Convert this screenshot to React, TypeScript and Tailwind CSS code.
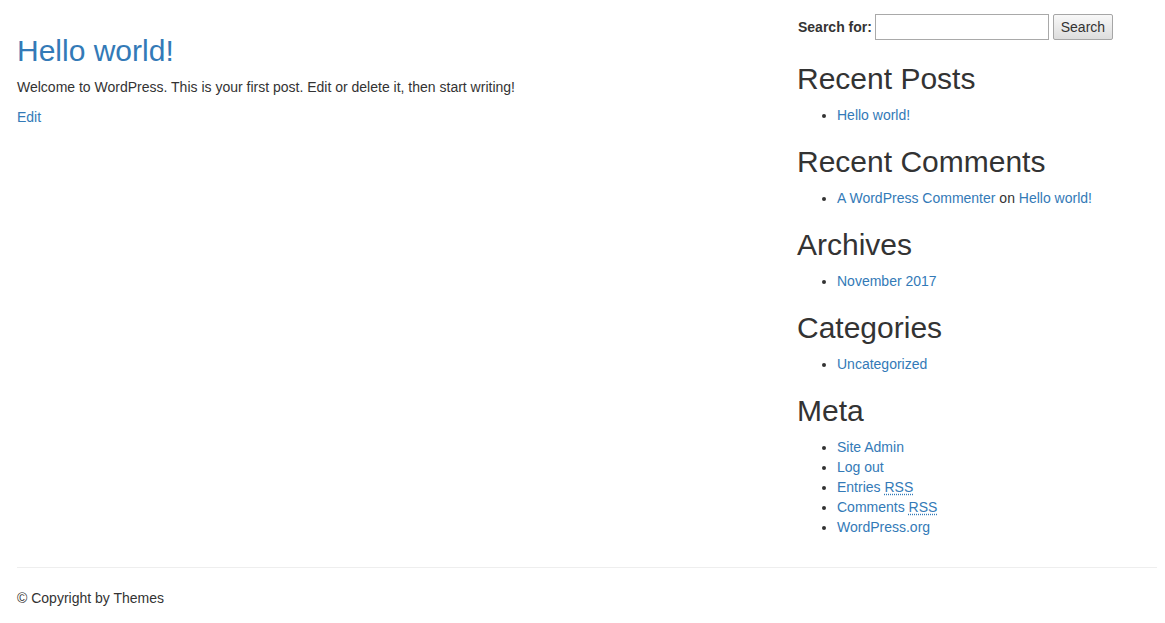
const Widget = ({ title, children }: { title: string; children: React.ReactNode }) => (
  <section>
    <h2 className="mt-[20px] mb-[10px] text-[30px] leading-[33px] font-medium text-[#333]">{title}</h2>
    <ul className="list-disc pl-[40px] mb-[10px]">{children}</ul>
  </section>
);

const A = ({ children }: { children: React.ReactNode }) => (
  <a href="#" className="text-[#337ab7] hover:underline">
    {children}
  </a>
);

const Rss = () => (
  <abbr title="Really Simple Syndication" className="underline decoration-dotted decoration-[#337ab7] underline-offset-2">
    RSS
  </abbr>
);

export default function App() {
  return (
    <div className="min-h-screen bg-white text-[14px] leading-[20px] text-[#333] font-['Liberation_Sans',Arial,sans-serif] pl-[17px] pr-[8px]">
      <div className="flex">
        {/* Main */}
        <main className="flex-1 pt-[34px]">
          <article>
            <h2 className="mb-[10px] text-[30px] leading-[33px] font-medium">
              <a href="#" className="text-[#337ab7]">Hello world!</a>
            </h2>
            <p className="mb-[10px]">Welcome to WordPress. This is your first post. Edit or delete it, then start writing!</p>
            <A>Edit</A>
          </article>
        </main>

        {/* Sidebar */}
        <aside className="w-[360px] pt-[14px]">
          <form className="flex items-center h-[26px]">
            <label className="font-bold ml-[1px] mr-[3px]">Search for:</label>
            <input
              type="text"
              className="w-[174px] h-[26px] border border-[#a9a9a9] px-1 outline-none"
            />
            <button
              type="button"
              className="ml-[4px] h-[26px] w-[60px] border border-[#a6a6a6] rounded-[2px] bg-gradient-to-b from-[#f8f8f8] to-[#dddddd] text-[#333]"
            >
              Search
            </button>
          </form>
          <div className="h-[2px]" />

          <Widget title="Recent Posts">
            <li><A>Hello world!</A></li>
          </Widget>
          <Widget title="Recent Comments">
            <li>
              <A>A WordPress Commenter</A> on <A>Hello world!</A>
            </li>
          </Widget>
          <Widget title="Archives">
            <li><A>November 2017</A></li>
          </Widget>
          <Widget title="Categories">
            <li><A>Uncategorized</A></li>
          </Widget>
          <Widget title="Meta">
            <li><A>Site Admin</A></li>
            <li><A>Log out</A></li>
            <li><A>Entries <Rss /></A></li>
            <li><A>Comments <Rss /></A></li>
            <li><A>WordPress.org</A></li>
          </Widget>
        </aside>
      </div>

      {/* Footer */}
      <footer className="mt-[20px]">
        <hr className="border-0 border-t border-[#eee] my-[20px]" />
        <p>© Copyright by Themes</p>
      </footer>
    </div>
  );
}
